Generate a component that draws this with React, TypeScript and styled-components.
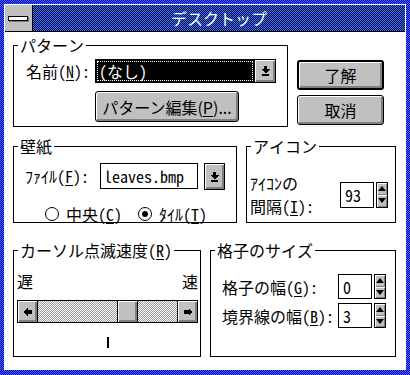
import React from "react";
import styled, { createGlobalStyle, css } from "styled-components";

const FONT = `"Noto Sans Mono CJK JP", "Noto Sans CJK JP", "Noto Sans", sans-serif`;
const PFONT = `"Noto Sans CJK JP", "Noto Sans", sans-serif`;

const GlobalStyle = createGlobalStyle`
  html, body { margin: 0; padding: 0; background: #fff; }
  body { font-family: ${FONT}; font-size: 16px; color: #000; }
  * { box-sizing: border-box; }
`;

const dither = (a: string, b: string) => css`
  background-color: ${a};
  background-image: repeating-conic-gradient(${a} 0 25%, ${b} 0 50%);
  background-size: 2px 2px;
`;

const bevel = css`
  background: #c0c0c0;
  box-shadow: inset 1px 1px 0 #fff, inset -1px -1px 0 #808080, inset -2px -2px 0 #808080;
`;

const Frame = styled.div`
  width: 410px;
  height: 375px;
  ${dither("#0000b0", "#4a6cff")}
  padding: 4px 4px 5px 4px;
  display: flex;
`;

const Window = styled.div`
  flex: 1;
  display: flex;
  flex-direction: column;
  border: 1px solid #fff;
`;

const TitleBar = styled.div`
  height: 27px;
  display: flex;
  border-bottom: 1px solid #000;
`;

const SysMenu = styled.div`
  width: 28px;
  background: #c0c0c0;
  border-right: 1px solid #000;
  display: flex;
  align-items: center;
  justify-content: center;
  padding-right: 1px;
`;

const SysBar = styled.div`
  width: 20px;
  height: 5px;
  background: #fff;
  border: 1px solid #000;
  box-shadow: 1px 1px 0 #808080;
`;

const Caption = styled.div`
  flex: 1;
  ${dither("#000080", "#3a7ab8")}
  color: #fff;
  text-align: center;
  line-height: 26px;
  font-size: 16px;
`;

const Client = styled.div`
  flex: 1;
  background: #fff;
  padding: 5px 9px 0 8px;
  display: flex;
  flex-direction: column;
`;

const Row = styled.div<{ $mt?: number }>`
  display: flex;
  gap: 9px;
  margin-top: ${(p) => p.$mt ?? 0}px;
`;

const Group = styled.fieldset<{ $w?: number; $h: number }>`
  margin: 0;
  padding: 0;
  border: 1px solid #000;
  min-width: 0;
  height: ${(p) => p.$h}px;
  ${(p) => (p.$w ? `width: ${p.$w}px; flex: none;` : `flex: 1;`)}
`;

const Legend = styled.legend`
  margin-left: 4px;
  padding: 0 2px;
  line-height: 16px;
  height: 16px;
  font-size: 16px;
`;

const Mn = styled.span`
  text-decoration: underline;
  text-underline-offset: 2px;
`;

const Label = styled.span`
  white-space: nowrap;
  line-height: 16px;
`;

const PatternBody = styled.div`
  display: grid;
  grid-template-columns: 69px 181px;
  row-gap: 8px;
  align-items: center;
  padding: 6px 0 0 12px;
`;

const Combo = styled.div`
  height: 24px;
  border: 1px solid #000;
  display: flex;
`;

const ComboField = styled.div`
  flex: 1;
  background: #000;
  padding: 1px;
  display: flex;
`;

const Focus = styled.div`
  flex: 1;
  border: 1px dotted #fff;
  color: #fff;
  padding-left: 1px;
  line-height: 18px;
`;

const ComboArrow = styled.div`
  width: 21px;
  border-left: 1px solid #000;
  ${bevel}
  display: flex;
  align-items: center;
  justify-content: center;
`;

const DropButton = styled.div`
  width: 21px;
  height: 27px;
  border: 1px solid #000;
  ${bevel}
  display: flex;
  align-items: center;
  justify-content: center;
`;

const PushButton = styled.button<{ $w: number; $h: number; $default?: boolean }>`
  width: ${(p) => p.$w}px;
  height: ${(p) => p.$h}px;
  padding: 0;
  font-family: ${PFONT};
  font-size: 16px;
  color: #000;
  white-space: nowrap;
  border: ${(p) => (p.$default ? 2 : 1)}px solid #000;
  border-radius: 3px;
  ${bevel}
  display: flex;
  align-items: center;
  justify-content: center;
  line-height: 16px;
`;

const EditButton = styled(PushButton)`
  grid-column: 2;
`;

const ButtonColumn = styled.div`
  display: flex;
  flex-direction: column;
  gap: 5px;
  margin-top: 23px;
`;

const WallBody = styled.div`
  padding: 9px 0 0 11px;
  display: flex;
  flex-direction: column;
`;

const FileRow = styled.div`
  display: flex;
  align-items: flex-start;
`;

const FileLabel = styled(Label)`
  width: 75px;
  line-height: 26px;
`;

const TextField = styled.div<{ $w: number; $h: number }>`
  width: ${(p) => p.$w}px;
  height: ${(p) => p.$h}px;
  border: 1px solid #000;
  background: #fff;
  padding-left: 3px;
  display: flex;
  align-items: center;
  line-height: 16px;
  margin-right: 6px;
`;

const RadioRow = styled.div`
  display: flex;
  gap: 16px;
  margin: 16px 0 0 20px;
`;

const Radio = styled.label`
  display: flex;
  align-items: center;
  gap: 7px;
  line-height: 16px;
`;

const RadioCircle = styled.span<{ $on?: boolean }>`
  width: 14px;
  height: 14px;
  border: 1px solid #000;
  border-radius: 50%;
  display: flex;
  align-items: center;
  justify-content: center;
  &::after {
    content: "";
    width: 6px;
    height: 6px;
    border-radius: 50%;
    background: ${(p) => (p.$on ? "#000" : "transparent")};
  }
`;

const IconBody = styled.div`
  display: flex;
  align-items: center;
  justify-content: space-between;
  padding: 21px 7px 0 3px;
`;

const IconLabel = styled.div`
  display: flex;
  flex-direction: column;
  gap: 7px;
`;

const IconLine = styled.div`
  height: 16px;
  line-height: 16px;
  white-space: nowrap;
`;

const SpinGroup = styled.div<{ $h: number }>`
  display: flex;
  gap: 2px;
  height: ${(p) => p.$h}px;
`;

const NumField = styled.div`
  width: 34px;
  height: 100%;
  border: 1px solid #000;
  padding-left: 4px;
  display: flex;
  align-items: center;
  line-height: 16px;
`;

const Spin = styled.div`
  width: 12px;
  height: 100%;
  border: 1px solid #000;
  display: flex;
  flex-direction: column;
  background: #c0c0c0;
`;

const SpinHalf = styled.div`
  flex: 1;
  display: flex;
  align-items: center;
  justify-content: center;
  box-shadow: inset 1px 1px 0 #fff, inset -1px -1px 0 #808080;
`;

const CursorBody = styled.div`
  display: flex;
  flex-direction: column;
  padding: 15px 2px 0 3px;
`;

const SpeedLabels = styled.div`
  display: flex;
  justify-content: space-between;
  line-height: 16px;
`;

const ScrollBar = styled.div`
  margin-top: 11px;
  height: 23px;
  border: 1px solid #000;
  display: flex;
`;

const ScrollArrow = styled.div<{ $side: "left" | "right" }>`
  width: 20px;
  ${(p) => (p.$side === "left" ? "border-right" : "border-left")}: 1px solid #000;
  ${bevel}
  display: flex;
  align-items: center;
  justify-content: center;
`;

const Track = styled.div`
  ${dither("#ffffff", "#9a9a9a")}
  flex-basis: 0;
`;

const Thumb = styled.div`
  width: 21px;
  border-left: 1px solid #000;
  border-right: 1px solid #000;
  ${bevel}
`;

const Caret = styled.div`
  align-self: center;
  width: 2px;
  height: 11px;
  background: #000;
  margin-top: 14px;
`;

const GridBody = styled.div`
  display: grid;
  grid-template-columns: 1fr auto;
  row-gap: 4px;
  align-items: center;
  padding: 16px 9px 0 11px;
`;

const DownArrow = () => (
  <svg width="9" height="10" viewBox="0 0 9 10" shapeRendering="crispEdges">
    <rect x="3" y="0" width="3" height="3" fill="#000" />
    <polygon points="0,3 9,3 4.5,7.5" fill="#000" />
    <rect x="1" y="8" width="7" height="2" fill="#000" />
  </svg>
);

const HArrow = ({ dir }: { dir: "left" | "right" }) => (
  <svg width="10" height="8" viewBox="0 0 10 8" shapeRendering="crispEdges">
    <g transform={dir === "right" ? "translate(10,0) scale(-1,1)" : undefined}>
      <polygon points="0,4 4.5,0 4.5,8" fill="#000" />
      <rect x="4" y="2" width="5" height="4" fill="#000" />
    </g>
  </svg>
);

const Tri = ({ up }: { up?: boolean }) => (
  <svg width="8" height="5" viewBox="0 0 8 5">
    <polygon points={up ? "0,5 8,5 4,0" : "0,0 8,0 4,5"} fill="#000" />
  </svg>
);

const Spinner = ({ value, h }: { value: string; h: number }) => (
  <SpinGroup $h={h}>
    <NumField>{value}</NumField>
    <Spin>
      <SpinHalf>
        <Tri up />
      </SpinHalf>
      <SpinHalf>
        <Tri />
      </SpinHalf>
    </Spin>
  </SpinGroup>
);

const blinkPos = 79 / 118;

export default function App() {
  return (
    <>
      <GlobalStyle />
      <Frame>
        <Window>
          <TitleBar>
            <SysMenu>
              <SysBar />
            </SysMenu>
            <Caption>デスクトップ</Caption>
          </TitleBar>
          <Client>
            <Row>
              <Group $w={275} $h={90}>
                <Legend>パターン</Legend>
                <PatternBody>
                  <Label>
                    名前(<Mn>N</Mn>):
                  </Label>
                  <Combo>
                    <ComboField>
                      <Focus>(なし)</Focus>
                    </ComboField>
                    <ComboArrow>
                      <DownArrow />
                    </ComboArrow>
                  </Combo>
                  <EditButton $w={144} $h={31}>
                    パターン編集(<Mn>P</Mn>)...
                  </EditButton>
                </PatternBody>
              </Group>
              <ButtonColumn>
                <PushButton $w={87} $h={30} $default>
                  了解
                </PushButton>
                <PushButton $w={87} $h={30}>
                  取消
                </PushButton>
              </ButtonColumn>
            </Row>
            <Row $mt={11}>
              <Group $w={224} $h={85}>
                <Legend>壁紙</Legend>
                <WallBody>
                  <FileRow>
                    <FileLabel>
                      ﾌｧｲﾙ(<Mn>F</Mn>):
                    </FileLabel>
                    <TextField $w={98} $h={26}>
                      leaves.bmp
                    </TextField>
                    <DropButton>
                      <DownArrow />
                    </DropButton>
                  </FileRow>
                  <RadioRow>
                    <Radio>
                      <RadioCircle />
                      <span>
                        中央(<Mn>C</Mn>)
                      </span>
                    </Radio>
                    <Radio>
                      <RadioCircle $on />
                      <span>
                        ﾀｲﾙ(<Mn>T</Mn>)
                      </span>
                    </Radio>
                  </RadioRow>
                </WallBody>
              </Group>
              <Group $h={85}>
                <Legend>アイコン</Legend>
                <IconBody>
                  <IconLabel>
                    <IconLine>ｱｲｺﾝの</IconLine>
                    <IconLine>
                      間隔(<Mn>I</Mn>):
                    </IconLine>
                  </IconLabel>
                  <Spinner value="93" h={26} />
                </IconBody>
              </Group>
            </Row>
            <Row $mt={19}>
              <Group $w={188} $h={115}>
                <Legend>
                  カーソル点滅速度(<Mn>R</Mn>)
                </Legend>
                <CursorBody>
                  <SpeedLabels>
                    <span>遅</span>
                    <span>速</span>
                  </SpeedLabels>
                  <ScrollBar>
                    <ScrollArrow $side="left">
                      <HArrow dir="left" />
                    </ScrollArrow>
                    <Track style={{ flexGrow: blinkPos }} />
                    <Thumb />
                    <Track style={{ flexGrow: 1 - blinkPos }} />
                    <ScrollArrow $side="right">
                      <HArrow dir="right" />
                    </ScrollArrow>
                  </ScrollBar>
                  <Caret />
                </CursorBody>
              </Group>
              <Group $h={115}>
                <Legend>格子のサイズ</Legend>
                <GridBody>
                  <Label>
                    格子の幅(<Mn>G</Mn>):
                  </Label>
                  <Spinner value="0" h={25} />
                  <Label>
                    境界線の幅(<Mn>B</Mn>):
                  </Label>
                  <Spinner value="3" h={25} />
                </GridBody>
              </Group>
            </Row>
          </Client>
        </Window>
      </Frame>
    </>
  );
}
